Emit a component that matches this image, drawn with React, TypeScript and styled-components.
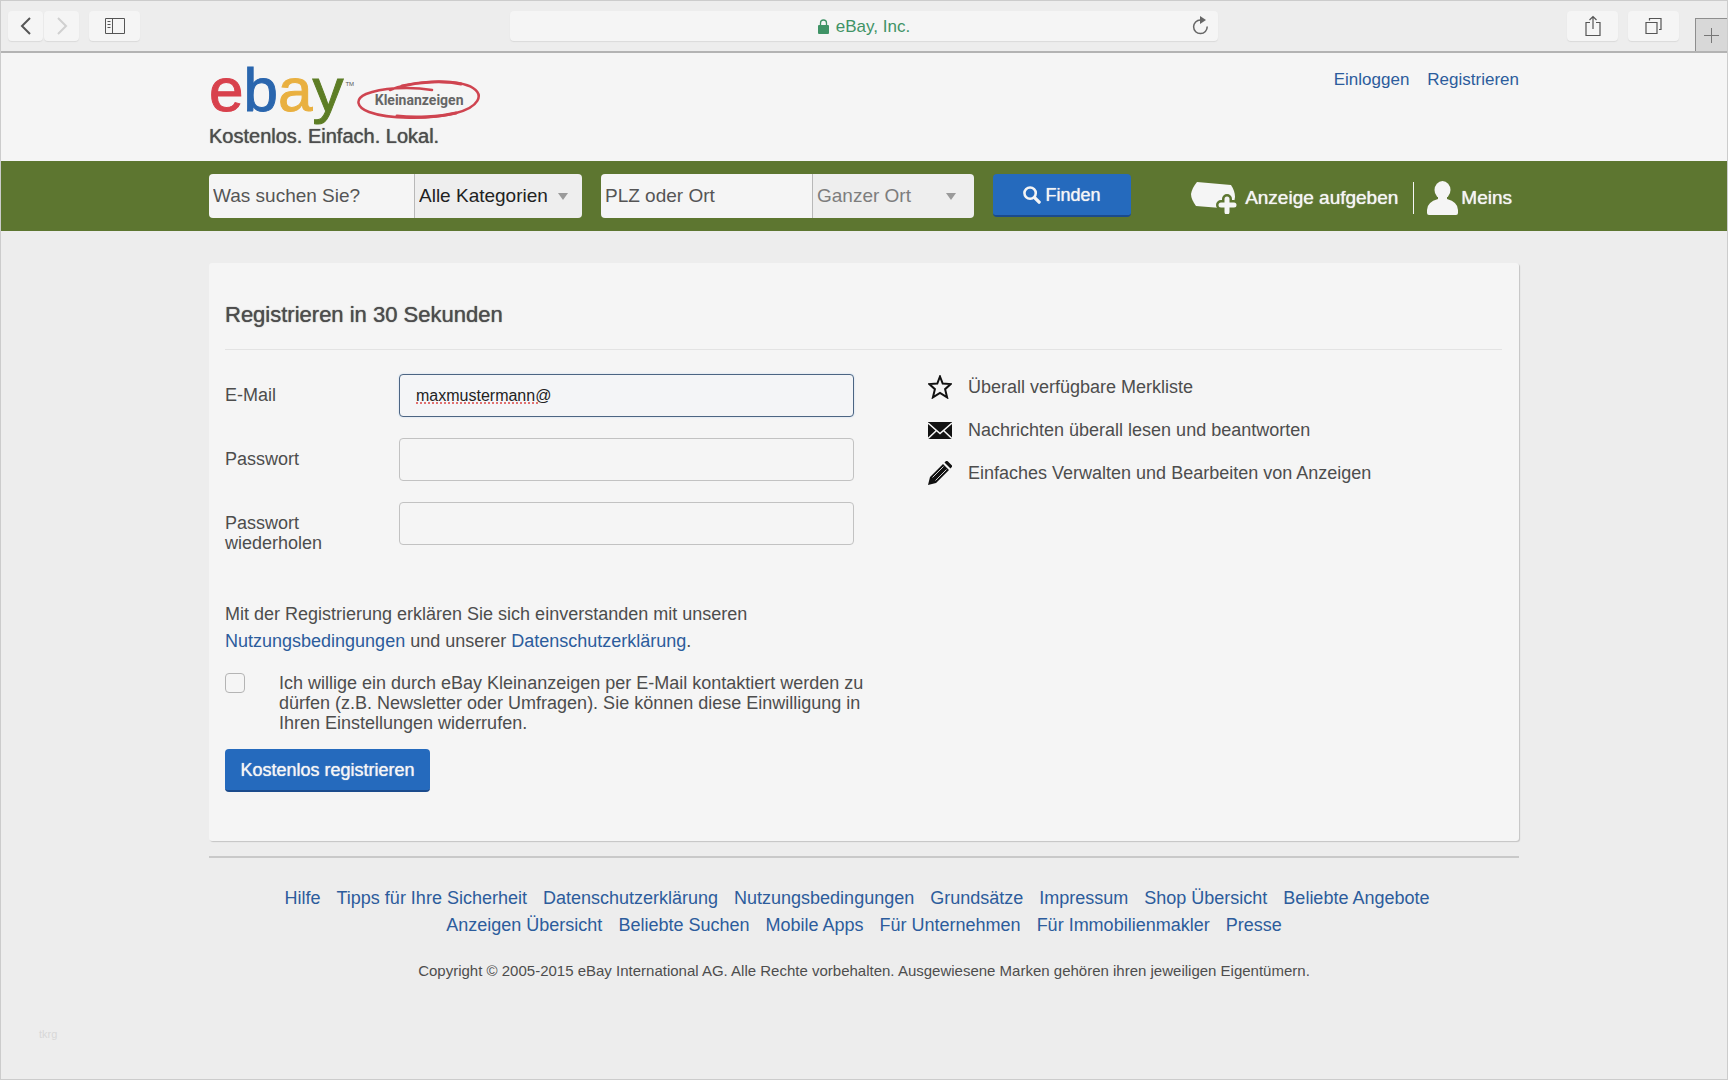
import React from 'react';
import styled, { createGlobalStyle } from 'styled-components';

const color = {
  page: '#ededed',
  panel: '#f5f5f5',
  green: '#5d7630',
  blue: '#256abd',
  blueDark: '#1b4b8c',
  link: '#2c5c9c',
  text: '#4d4d4d',
  border: '#c2c2c2',
};

const GlobalStyle = createGlobalStyle`
  *, *::before, *::after { box-sizing: border-box; }
  body {
    margin: 0;
    background: ${color.page};
    color: ${color.text};
    font-family: "Liberation Sans", Arial, sans-serif;
    font-size: 18px;
    line-height: 20px;
  }
  button, input, select { font: inherit; color: inherit; margin: 0; }
  a { color: ${color.link}; text-decoration: none; }
  svg { display: block; flex: none; }
`;

const Window = styled.div`
  min-height: 100vh;
  display: flex;
  flex-direction: column;
  border: 1px solid #cccccc;
`;

/* Browser toolbar */
const Toolbar = styled.div`
  height: 52px;
  display: grid;
  grid-template-columns: 1fr 41% 1fr;
  align-items: center;
  border-bottom: 2px solid #b3b3b3;
`;

const ToolGroup = styled.div<{ $end?: boolean }>`
  display: flex;
  height: 100%;
  align-items: center;
  gap: 10px;
  padding-left: 7px;
  justify-content: ${(p) => (p.$end ? 'flex-end' : 'flex-start')};
`;

const Pair = styled.div`
  display: flex;
  gap: 1px;
`;

const ToolButton = styled.button<{ $wide?: boolean; $muted?: boolean }>`
  width: ${(p) => (p.$wide ? '51px' : '35px')};
  height: 30px;
  padding: 0;
  display: flex;
  align-items: center;
  justify-content: center;
  border: 0;
  border-radius: 4px;
  background: ${color.panel};
  box-shadow: 0 1px 1px #dadada;
  color: ${(p) => (p.$muted ? '#d0d0d0' : '#555555')};
`;

const Address = styled.div`
  height: 30px;
  display: grid;
  grid-template-columns: 34px 1fr 34px;
  align-items: center;
  border-radius: 4px;
  background: ${color.panel};
  box-shadow: 0 1px 1px #dadada;
`;

const Site = styled.div`
  grid-column: 2;
  display: flex;
  align-items: center;
  justify-content: center;
  gap: 7px;
  padding-top: 1px;
  color: #3f9366;
  font-size: 17px;
`;

const Reload = styled.button`
  justify-self: center;
  padding: 0 0 2px;
  border: 0;
  background: none;
  color: #666666;
`;

const NewTab = styled.button`
  width: 32px;
  height: 33px;
  padding: 0;
  display: flex;
  align-items: center;
  justify-content: center;
  align-self: flex-end;
  margin-left: 6px;
  border: 1px solid #8e8e8e;
  border-right: 0;
  border-bottom: 0;
  background: #d8d8d8;
  color: #777777;
`;

/* Site header */
const Container = styled.div`
  width: 100%;
  max-width: 1310px;
  margin: 0 auto;
`;

const Header = styled.header`
  background: ${color.panel};
`;

const HeaderRow = styled(Container)`
  display: flex;
  justify-content: space-between;
  height: 108px;
  padding-top: 5px;
`;

const LogoRow = styled.div`
  display: flex;
  height: 68px;
`;

const Wordmark = styled.div`
  font-size: 62px;
  line-height: 63px;
`;

const Letter = styled.span<{ $c: string }>`
  color: ${(p) => p.$c};
  -webkit-text-stroke: 1px ${(p) => p.$c};
`;

const Trademark = styled.span`
  font-size: 6px;
  line-height: 8px;
  padding: 22px 0 0 2px;
  color: #555555;
`;

const Oval = styled.div`
  position: relative;
  width: 124px;
  height: 40px;
  margin: 22px 0 0 3px;
  display: flex;
  align-items: center;
  justify-content: center;
  svg { position: absolute; inset: 0; }
`;

const OvalText = styled.span`
  font-family: Roboto, "Liberation Sans", sans-serif;
  font-size: 14px;
  font-weight: bold;
  line-height: 20px;
  color: #666666;
`;

const Tagline = styled.div`
  font-size: 20px;
  text-shadow: 0 0 1px ${color.text};
`;

const AccountLinks = styled.nav`
  display: flex;
  gap: 18px;
  padding-top: 12px;
  font-size: 17px;
`;

/* Search bar */
const SearchBand = styled.div`
  background: ${color.green};
`;

const SearchRow = styled(Container)`
  display: flex;
  align-items: center;
  padding: 13px 7px 13px 0;
  font-size: 19px;
`;

const SearchForm = styled.form`
  display: flex;
  gap: 19px;
`;

const FieldPair = styled.div`
  display: flex;
  height: 44px;
  border-radius: 4px;
  overflow: hidden;
`;

const SearchInput = styled.input<{ $w: number }>`
  width: ${(p) => p.$w}px;
  padding: 0 4px;
  border: 0;
  background: ${color.panel};
  &::placeholder { color: #555555; opacity: 1; }
`;

const SelectBox = styled.div<{ $w: number; $muted?: boolean }>`
  position: relative;
  width: ${(p) => p.$w}px;
  border-left: 1px solid #b8b8b8;
  color: ${(p) => (p.$muted ? '#7d7d7d' : '#222222')};
  svg { position: absolute; right: ${(p) => (p.$muted ? '18px' : '14px')}; top: 19px; pointer-events: none; }
`;

const Select = styled.select`
  width: 100%;
  height: 100%;
  padding: 0 4px;
  border: 0;
  border-radius: 0;
  appearance: none;
  background: #eeeeee;
`;

const PrimaryButton = styled.button<{ $w: number }>`
  width: ${(p) => p.$w}px;
  height: 43px;
  padding: 0;
  display: flex;
  align-items: center;
  justify-content: center;
  gap: 4px;
  border: 0;
  border-bottom: 2px solid ${color.blueDark};
  border-radius: 4px;
  background: ${color.blue};
  color: #f5f5f5;
  font-size: 18px;
  text-shadow: 0 0 1px #f5f5f5;
`;

const UserLinks = styled.nav`
  display: flex;
  align-items: center;
  margin-left: auto;
  padding-top: 3px;
`;

const UserLink = styled.a<{ $gap: number }>`
  display: flex;
  align-items: center;
  gap: ${(p) => p.$gap}px;
  color: #f5f5f5;
  text-shadow: 0 0 1px #f5f5f5;
`;

const Separator = styled.span`
  width: 1px;
  height: 32px;
  margin: 0 13px 0 15px;
  background: #f5f5f5;
`;

/* Registration card */
const Main = styled.main`
  padding: 32px 0 15px;
`;

const Card = styled(Container)`
  padding: 40px 17px 49px 16px;
  border-radius: 3px;
  background: ${color.panel};
  box-shadow: 1px 1px 1px #c4c4c4;
`;

const Title = styled.h1`
  margin: 0;
  padding-bottom: 22px;
  border-bottom: 1px solid #e3e3e3;
  font-size: 22px;
  font-weight: normal;
  line-height: 24px;
  text-shadow: 0 0 1px ${color.text};
`;

const Columns = styled.div`
  display: grid;
  grid-template-columns: 629px 1fr;
  column-gap: 74px;
  padding-top: 24px;
`;

const Fields = styled.div`
  display: grid;
  gap: 21px;
`;

const FieldRow = styled.div`
  display: grid;
  grid-template-columns: 120px 1fr;
  column-gap: 54px;
`;

const FieldLabel = styled.label`
  padding-top: 11px;
`;

const InputWrap = styled.div`
  position: relative;
`;

const TextInput = styled.input<{ $active?: boolean }>`
  display: block;
  width: 100%;
  height: 43px;
  padding: 0 16px;
  border: 1px solid ${(p) => (p.$active ? '#4c6583' : color.border)};
  border-radius: 4px;
  background: ${(p) => (p.$active ? '#f4f5f7' : color.panel)};
  box-shadow: ${(p) => (p.$active ? '0 0 2px #c5d9ee' : 'none')};
  color: #222222;
  font-size: 16px;
  outline: 0;
`;

const SpellMark = styled.span`
  position: absolute;
  left: 17px;
  top: 28px;
  width: 122px;
  border-bottom: 2px dotted #e07070;
`;

const Terms = styled.p`
  margin: 48px 0 18px;
  line-height: 27px;
`;

const Consent = styled.div`
  display: grid;
  grid-template-columns: 54px 1fr;
  margin: 0 -20px 16px 0;
`;

const Checkbox = styled.input`
  appearance: none;
  width: 20px;
  height: 20px;
  border: 1px solid #b4b4b4;
  border-radius: 4px;
  background: ${color.panel};
`;

const Benefits = styled.ul`
  margin: 0;
  padding: 0;
  list-style: none;
`;

const Benefit = styled.li`
  display: flex;
  align-items: center;
  gap: 16px;
  height: 26px;
  margin-bottom: 17px;
  svg { color: #111111; }
`;

/* Footer */
const Footer = styled(Container).attrs({ as: 'footer' })`
  border-top: 2px solid #c9c9c9;
  padding-top: 27px;
  text-align: center;
`;

const LinkRow = styled.nav`
  display: flex;
  justify-content: center;
  gap: 16px;
  line-height: 27px;
  padding-right: 14px;
  &:last-of-type { padding-right: 0; }
`;

const Copyright = styled.p`
  margin: 22px 0 0;
  font-size: 15px;
`;

const Watermark = styled.small`
  margin: 47px 0 32px 38px;
  font-size: 11px;
  line-height: 12px;
  color: #d8d8d8;
`;

const Arrow = () => (
  <svg width="10" height="7" viewBox="0 0 10 7"><path d="M0 0h10L5 7z" fill="#9a9a9a" /></svg>
);

const line = { fill: 'none', stroke: 'currentColor' };

const footerLinks = [
  ['Hilfe', 'Tipps für Ihre Sicherheit', 'Datenschutzerklärung', 'Nutzungsbedingungen', 'Grundsätze', 'Impressum', 'Shop Übersicht', 'Beliebte Angebote'],
  ['Anzeigen Übersicht', 'Beliebte Suchen', 'Mobile Apps', 'Für Unternehmen', 'Für Immobilienmakler', 'Presse'],
];

export default function App() {
  return (
    <Window>
      <GlobalStyle />
      <Toolbar>
        <ToolGroup>
          <Pair>
            <ToolButton aria-label="Zurück">
              <svg width="12" height="18" viewBox="0 0 12 18" {...line} strokeWidth="2"><path d="M10 1L2 9l8 8" /></svg>
            </ToolButton>
            <ToolButton $muted aria-label="Vorwärts">
              <svg width="12" height="18" viewBox="0 0 12 18" {...line} strokeWidth="2"><path d="M2 1l8 8-8 8" /></svg>
            </ToolButton>
          </Pair>
          <ToolButton $wide aria-label="Seitenleiste">
            <svg width="22" height="18" viewBox="0 0 22 18" {...line}>
              <path d="M1.500 1.500h19v15h-19zM8.500 1.500v15M3.500 4.500h3M3.500 7.500h3M3.500 10.500h3" />
            </svg>
          </ToolButton>
        </ToolGroup>
        <Address>
          <Site>
            <svg width="11" height="15" viewBox="0 0 11 15">
              <rect x="0" y="6" width="11" height="9" rx="1" fill="currentColor" />
              <path d="M2.500 7V4a3 3 0 0 1 6 0v3" fill="none" stroke="currentColor" strokeWidth="1.300" />
            </svg>
            eBay, Inc.
          </Site>
          <Reload aria-label="Neu laden">
            <svg width="17" height="19" viewBox="0 0 17 19">
              <path d="M8.500 4A6.800 6.800 0 1 0 15.200 10.500" fill="none" stroke="currentColor" strokeWidth="1.500" />
              <path d="M8 0l6 4-6 4z" fill="currentColor" />
            </svg>
          </Reload>
        </Address>
        <ToolGroup $end>
          <ToolButton $wide aria-label="Teilen">
            <svg width="16" height="22" viewBox="0 0 16 22" {...line} strokeWidth="1.200">
              <path d="M5 7.500H1v13h14v-13h-4M8 14V1.500M4.500 5L8 1.500 11.500 5" />
            </svg>
          </ToolButton>
          <ToolButton $wide aria-label="Tabs">
            <svg width="17" height="18" viewBox="0 0 17 18" {...line} strokeWidth="1.200">
              <path d="M1 5.500h11v11H1zM4.500 3.500V1.500H16v11h-2" />
            </svg>
          </ToolButton>
          <NewTab aria-label="Neuer Tab">
            <svg width="15" height="15" viewBox="0 0 15 15" {...line}><path d="M7.500 0v15M0 7.500h15" /></svg>
          </NewTab>
        </ToolGroup>
      </Toolbar>

      <Header>
        <HeaderRow>
          <div>
            <LogoRow>
              <Wordmark>
                <Letter $c="#d8414c">e</Letter>
                <Letter $c="#2a66ae">b</Letter>
                <Letter $c="#e9b040">a</Letter>
                <Letter $c="#5d7d25">y</Letter>
              </Wordmark>
              <Trademark>TM</Trademark>
              <Oval>
                <svg width="124" height="40" viewBox="0 0 124 40" fill="none" stroke="#cf4450" strokeLinecap="round">
                  <path d="M75 10C52 6 24 8 9 14C-2 19-1 27 12 32C31 39 72 40 99 33C122 27 127 15 116 8C101-1 57 0 33 10" strokeWidth="2.500" />
                  <path d="M45 6C62 2 86 0 104 4M40 36C58 38 82 37 99 33" strokeWidth="3" />
                </svg>
                <OvalText>Kleinanzeigen</OvalText>
              </Oval>
            </LogoRow>
            <Tagline>Kostenlos. Einfach. Lokal.</Tagline>
          </div>
          <AccountLinks>
            <a href="#login">Einloggen</a>
            <a href="#register">Registrieren</a>
          </AccountLinks>
        </HeaderRow>
      </Header>

      <SearchBand>
        <SearchRow>
          <SearchForm>
            <FieldPair>
              <SearchInput $w={205} aria-label="Suchbegriff" placeholder="Was suchen Sie?" />
              <SelectBox $w={168}>
                <Select aria-label="Kategorie"><option>Alle Kategorien</option></Select>
                <Arrow />
              </SelectBox>
            </FieldPair>
            <FieldPair>
              <SearchInput $w={211} aria-label="Ort" placeholder="PLZ oder Ort" />
              <SelectBox $w={162} $muted>
                <Select aria-label="Umkreis"><option>Ganzer Ort</option></Select>
                <Arrow />
              </SelectBox>
            </FieldPair>
            <PrimaryButton $w={138} type="button">
              <svg width="18" height="18" viewBox="0 0 19 19" fill="none" stroke="currentColor">
                <circle cx="7.500" cy="7.500" r="6" strokeWidth="2.700" />
                <path d="M12.500 12.500l4.500 4.500" strokeWidth="3.600" strokeLinecap="round" />
              </svg>
              Finden
            </PrimaryButton>
          </SearchForm>
          <UserLinks>
            <UserLink href="#post" $gap={8}>
              <svg width="46" height="32" viewBox="0 0 46 32">
                <path d="M6 0l34 3q4 6 4 12l-2 12L5 24Q0 17 0 12Q1 6 6 0z" fill="#f5f5f5" />
                <path d="M36 17v13M30 23h13" stroke={color.green} strokeWidth="10" strokeLinecap="round" />
                <path d="M36 17v13M30 23h13" stroke="#f5f5f5" strokeWidth="5" strokeLinecap="round" />
              </svg>
              Anzeige aufgeben
            </UserLink>
            <Separator />
            <UserLink href="#account" $gap={3}>
              <svg width="31" height="34" viewBox="0 0 31 34" fill="#f5f5f5">
                <ellipse cx="15.500" cy="9" rx="8" ry="9" />
                <path d="M11 14h9v4q11 3 11 11v3q0 2-2 2H2q-2 0-2-2v-3q0-8 11-11z" />
              </svg>
              Meins
            </UserLink>
          </UserLinks>
        </SearchRow>
      </SearchBand>

      <Main>
        <Card>
          <Title>Registrieren in 30 Sekunden</Title>
          <Columns>
            <form>
              <Fields>
                <FieldRow>
                  <FieldLabel htmlFor="email">E-Mail</FieldLabel>
                  <InputWrap>
                    <TextInput $active id="email" type="text" defaultValue="maxmustermann@" spellCheck={false} />
                    <SpellMark />
                  </InputWrap>
                </FieldRow>
                <FieldRow>
                  <FieldLabel htmlFor="password">Passwort</FieldLabel>
                  <TextInput id="password" type="password" />
                </FieldRow>
                <FieldRow>
                  <FieldLabel htmlFor="repeat">Passwort wiederholen</FieldLabel>
                  <TextInput id="repeat" type="password" />
                </FieldRow>
              </Fields>
              <Terms>
                Mit der Registrierung erklären Sie sich einverstanden mit unseren{' '}
                <br />
                <a href="#terms">Nutzungsbedingungen</a> und unserer <a href="#privacy">Datenschutzerklärung</a>.
              </Terms>
              <Consent>
                <Checkbox id="consent" type="checkbox" />
                <label htmlFor="consent">
                  Ich willige ein durch eBay Kleinanzeigen per E-Mail kontaktiert werden zu dürfen (z.B. Newsletter oder
                  Umfragen). Sie können diese Einwilligung in Ihren Einstellungen widerrufen.
                </label>
              </Consent>
              <PrimaryButton $w={205} type="button">Kostenlos registrieren</PrimaryButton>
            </form>
            <Benefits>
              <Benefit>
                <svg width="24" height="24" viewBox="0 0 24 24" fill="none" stroke="currentColor" strokeWidth="2">
                  <path d="M12 1.500l2.700 7 8 .6-5.600 5.100 2 8.200-7.100-4.400-7.100 4.400 2-8.200L1.300 9.100l8-.6z" />
                </svg>
                Überall verfügbare Merkliste
              </Benefit>
              <Benefit>
                <svg width="24" height="17" viewBox="0 0 24 17">
                  <path d="M0 0h24v17H0z" fill="currentColor" />
                  <path d="M0 1l12 10.500L24 1M0 16.500l8.500-8M24 16.500l-8.500-8" fill="none" stroke="#f5f5f5" strokeWidth="1.600" />
                </svg>
                Nachrichten überall lesen und beantworten
              </Benefit>
              <Benefit>
                <svg width="24" height="24" viewBox="0 0 24 24">
                  <path d="M0 24l2-8L15 3l6 6L8 22zM16.500 1.500L18 0q1-.5 2 .5l3.500 3.500q1 1 .3 2L22.500 7.500z" fill="currentColor" />
                  <path d="M4.500 16.500L15.500 5.500M7.500 19.500L18.500 8.500" stroke="#d0d0d0" strokeWidth="1" />
                </svg>
                Einfaches Verwalten und Bearbeiten von Anzeigen
              </Benefit>
            </Benefits>
          </Columns>
        </Card>
      </Main>

      <Footer>
        {footerLinks.map((row) => (
          <LinkRow key={row[0]}>
            {row.map((label) => <a key={label} href="#info">{label}</a>)}
          </LinkRow>
        ))}
        <Copyright>
          Copyright © 2005-2015 eBay International AG. Alle Rechte vorbehalten. Ausgewiesene Marken gehören ihren
          jeweiligen Eigentümern.
        </Copyright>
      </Footer>
      <Watermark>tkrg</Watermark>
    </Window>
  );
}
